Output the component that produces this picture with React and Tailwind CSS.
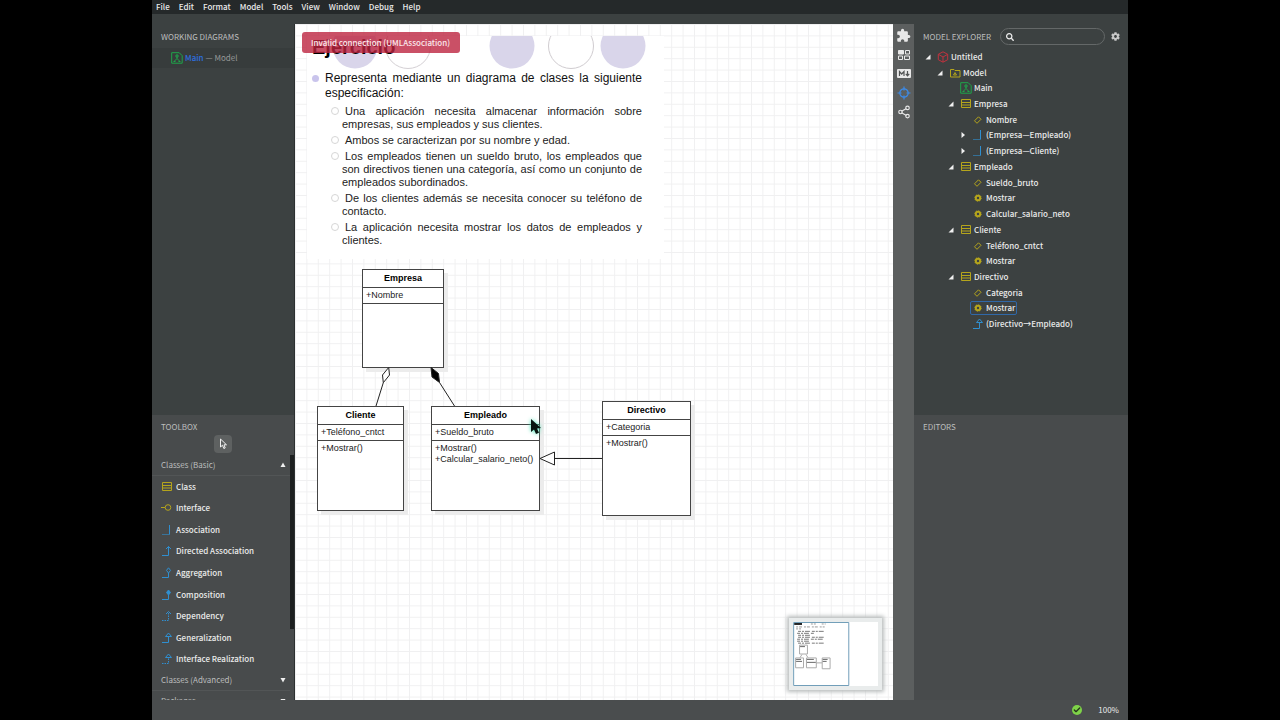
import { Share2, Check } from 'lucide-react'
import { FaCog, FaSearch } from 'react-icons/fa'
import { MdExtension } from 'react-icons/md'

const YELLOW = '#b5a51c'
const BLUE = '#2f8fd0'
const GREEN = '#1fa64a'

const MENUS = ['File', 'Edit', 'Format', 'Model', 'Tools', 'View', 'Window', 'Debug', 'Help']

const TOOLS = [
  { kind: 'class', label: 'Class' },
  { kind: 'interface', label: 'Interface' },
  { kind: 'association', label: 'Association' },
  { kind: 'directed', label: 'Directed Association' },
  { kind: 'aggregation', label: 'Aggregation' },
  { kind: 'composition', label: 'Composition' },
  { kind: 'dependency', label: 'Dependency' },
  { kind: 'generalization', label: 'Generalization' },
  { kind: 'realization', label: 'Interface Realization' },
]

const TREE = [
  { level: 0, kind: 'project', label: 'Untitled', arrow: 'open' },
  { level: 1, kind: 'model', label: 'Model', arrow: 'open' },
  { level: 2, kind: 'diagram', label: 'Main' },
  { level: 2, kind: 'class', label: 'Empresa', arrow: 'open' },
  { level: 3, kind: 'attribute', label: 'Nombre' },
  { level: 3, kind: 'association', label: '(Empresa—Empleado)', arrow: 'closed' },
  { level: 3, kind: 'association', label: '(Empresa—Cliente)', arrow: 'closed' },
  { level: 2, kind: 'class', label: 'Empleado', arrow: 'open' },
  { level: 3, kind: 'attribute', label: 'Sueldo_bruto' },
  { level: 3, kind: 'operation', label: 'Mostrar' },
  { level: 3, kind: 'operation', label: 'Calcular_salario_neto' },
  { level: 2, kind: 'class', label: 'Cliente', arrow: 'open' },
  { level: 3, kind: 'attribute', label: 'Teléfono_cntct' },
  { level: 3, kind: 'operation', label: 'Mostrar' },
  { level: 2, kind: 'class', label: 'Directivo', arrow: 'open' },
  { level: 3, kind: 'attribute', label: 'Categoria' },
  { level: 3, kind: 'operation', label: 'Mostrar', selected: true },
  { level: 3, kind: 'generalization', label: '(Directivo→Empleado)' },
]

const INDENT = ['pl-[11px]', 'pl-[23px]', 'pl-[34px]', 'pl-[46px]']

const REQUIREMENTS = [
  'Una aplicación necesita almacenar información sobre empresas, sus empleados y sus clientes.',
  'Ambos se caracterizan por su nombre y edad.',
  'Los empleados tienen un sueldo bruto, los empleados que son directivos tienen una categoría, así como un conjunto de empleados subordinados.',
  'De los clientes además se necesita conocer su teléfono de contacto.',
  'La aplicación necesita mostrar los datos de empleados y clientes.',
]

function Glyph({ kind }) {
  const path = {
    class: <path stroke={YELLOW} d="M1.5 1.5h9v8h-9zM1.5 4.5h9M1.5 7h9" />,
    interface: (
      <g stroke={YELLOW}>
        <path d="M0 5.5h4" />
        <circle cx="7" cy="5.5" r="2.8" />
      </g>
    ),
    association: (
      <g stroke={BLUE}>
        <path d="M1 10.5h7.5" strokeOpacity="0.6" />
        <path d="M8.5 10.5V1" />
      </g>
    ),
    directed: <path stroke={BLUE} d="M1 10.5h6.5V1.5M5 4l2.5-2.5L10 4" />,
    aggregation: <path stroke={BLUE} d="M1 10.5h6.5V6M7.5 .8l2 2.6-2 2.6-2-2.6z" />,
    composition: (
      <g stroke={BLUE}>
        <path d="M1 10.5h6.5V6" />
        <path fill={BLUE} d="M7.5 1l2 2.5-2 2.5-2-2.5z" />
      </g>
    ),
    dependency: (
      <g stroke={BLUE}>
        <path strokeDasharray="1.5 1" d="M1 10.5h6.5V2" />
        <path d="M5 4l2.5-2.5L10 4" />
      </g>
    ),
    generalization: <path stroke={BLUE} d="M1 10.5h6.5v-6M4.5 4.5l3-3.5 3 3.5z" />,
    realization: (
      <g stroke={BLUE}>
        <path strokeDasharray="1.5 1" d="M1 10.5h6.5v-6" />
        <path d="M4.5 4.5l3-3.5 3 3.5z" />
      </g>
    ),
    project: <path stroke="#c0323f" d="M6 .8l4.7 2.5v5.4L6 11.2 1.3 8.7V3.3zM1.5 3.4L6 6l4.5-2.6M6 6v5" />,
    model: (
      <g stroke={YELLOW}>
        <path d="M1.5 2.5h3.500l1 1h5v6.500H1.500z" />
        <path d="M4.5 8L6 5.5 7.5 8z" />
      </g>
    ),
    diagram: (
      <g stroke={GREEN}>
        <path d="M.7.700h7.500l3 3v7.500H.7z" />
        <path d="M5 3h2v2H5zM6 5v1.500M3.500 9L6 6.500 8.500 9M2.500 9.500h2M7.500 9.500h2" />
      </g>
    ),
    attribute: <path stroke={YELLOW} d="M2.500 6.800l4-4 2.500 2.500-4 4z" />,
    operation: (
      <g stroke={YELLOW}>
        <circle cx="6" cy="6" r="2.2" strokeWidth="2" />
        <circle cx="6" cy="6" r="3.2" strokeDasharray="1.2 1.3" />
      </g>
    ),
  }[kind]
  return (
    <svg viewBox="0 0 12 12" className="size-3 shrink-0" fill="none" strokeWidth="1" aria-hidden>
      {path}
    </svg>
  )
}

function Arrow({ state }) {
  return (
    <svg viewBox="0 0 6 6" className="size-[6px] shrink-0" fill="#f0f0f0" aria-hidden>
      {state === 'open' && <path d="M5.500 .5v5h-5z" />}
      {state === 'closed' && <path d="M1.500 0L5 3 1.500 6z" />}
    </svg>
  )
}

function GroupHeader({ label, open }) {
  return (
    <button
      type="button"
      className="flex h-[21px] w-full shrink-0 items-center justify-between border-b border-[#525556] pr-1 pl-[9px] text-[#bcbebe]"
    >
      {label}
      <svg viewBox="0 0 6 6" className="size-[6px]" fill="#f0f0f0" aria-hidden>
        <path d={open ? 'M3 .5L5.500 5h-5z' : 'M3 5.500L5.500 1h-5z'} />
      </svg>
    </button>
  )
}

function LeftSidebar() {
  return (
    <aside className="flex w-[143px] shrink-0 flex-col border-r border-[#2c3030]">
      <section className="h-[391px] shrink-0 bg-[#3c4141] pt-[5px]">
        <h2 className="pl-[9px] leading-4 text-[#bcbebe]">WORKING DIAGRAMS</h2>
        <button type="button" className="mt-[3px] flex h-5 w-full items-center gap-[2px] bg-[#373c3c] pl-[19px]">
          <Glyph kind="diagram" />
          <span className="font-medium text-[#2d6fe0]">Main</span>
          <span className="text-[#969999]">— Model</span>
        </button>
      </section>
      <section className="flex min-h-0 flex-1 flex-col bg-[#484b4c] pt-1">
        <h2 className="pl-[9px] leading-4 text-[#bcbebe]">TOOLBOX</h2>
        <button
          type="button"
          aria-label="Select"
          className="mx-auto flex size-[18px] shrink-0 items-center justify-center rounded-sm bg-[#5e6161]"
        >
          <svg viewBox="0 0 12 12" className="size-3" fill="none" stroke="#f2f2f2" aria-hidden>
            <path d="M3.500 1v8l2-1.800L6.800 10.500 8.200 10 7 6.800h2.500z" />
          </svg>
        </button>
        <div className="mt-[2px] flex min-h-0 flex-1">
          <div className="min-w-0 flex-1 overflow-hidden">
            <GroupHeader label="Classes (Basic)" open />
            <ul className="grid h-[194px] auto-rows-fr">
              {TOOLS.map((t) => (
                <li key={t.kind} className="flex">
                  <button type="button" className="flex w-full items-center gap-[3px] pl-[9px] font-medium text-[#ebebeb]">
                    <Glyph kind={t.kind} />
                    {t.label}
                  </button>
                </li>
              ))}
            </ul>
            <GroupHeader label="Classes (Advanced)" />
            <GroupHeader label="Packages" />
          </div>
          <div className="h-[174px] w-1 bg-[#1d2020]" />
        </div>
      </section>
    </aside>
  )
}

function Slide() {
  return (
    <article className="absolute top-3 left-3 w-[357px] bg-white pr-[22px] pb-3 pl-[5px] font-['Liberation_Sans',sans-serif] text-[#222]">
      <svg className="absolute top-0 left-0 h-[34px] w-full" fill="none" aria-hidden>
        <circle cx="48" cy="10" r="22.5" fill="#d9d5ea" />
        <circle cx="101" cy="10" r="22.5" stroke="#d4d0d4" />
        <circle cx="205" cy="10" r="22.5" fill="#d9d5ea" />
        <circle cx="264" cy="10" r="22.5" stroke="#d0ccd0" />
        <circle cx="316" cy="10" r="22.5" fill="#d9d5ea" />
      </svg>
      <h1 className="relative h-[35px] text-[20px] leading-[22px] font-bold text-black">Ejercicio</h1>
      <div className="flex gap-[6px]">
        <span className="mt-1 size-[7px] shrink-0 rounded-full bg-[#c9c4ec]" />
        <p className="text-justify text-[12px] leading-[15px] text-[#111]">
          Representa mediante un diagrama de clases la siguiente especificación:
        </p>
      </div>
      <ul className="mt-1 flex flex-col gap-[3px] pl-[19px] text-[11px] leading-[13px]">
        {REQUIREMENTS.map((text) => (
          <li key={text} className="flex gap-[3px]">
            <span className="mt-[2px] size-2 shrink-0 rounded-full border border-[#d6d6d6]" />
            <p className="flex-1 text-justify indent-[3px]">{text}</p>
          </li>
        ))}
      </ul>
    </article>
  )
}

function UmlClass({ name, attributes, operations = [], className }) {
  return (
    <div
      className={`absolute border border-[#444] bg-white font-['Liberation_Sans',sans-serif] text-[9px] leading-[11px] text-[#222] shadow-[4px_4px_0_#ececec] ${className}`}
    >
      <h3 className="h-[18px] border-b border-[#444] pt-[3px] text-center font-bold text-black">{name}</h3>
      <div className="h-4 border-b border-[#444] pt-[2px] pl-[3px]">
        {attributes.map((a) => (
          <p key={a}>+{a}</p>
        ))}
      </div>
      <div className="pt-[2px] pl-[3px]">
        {operations.map((o) => (
          <p key={o}>+{o}()</p>
        ))}
      </div>
    </div>
  )
}

function Minimap() {
  return (
    <div className="absolute right-[11px] bottom-[10px] h-[72px] w-[93px] border-4 border-[#e9ecec] bg-white shadow-[0_0_4px_2px_#b9bdbd]">
      <svg className="size-full" viewBox="0 0 86 65" fill="none" aria-hidden>
        <g stroke="#777" strokeWidth="1">
          <path stroke="#222" strokeWidth="2" d="M1 2h8" />
          <path stroke="#999" strokeDasharray="2 1 3 2" d="M18 2h5M29 2h4M3 5h29M3 7h5" />
          <path strokeDasharray="3 1 2 1 5 2" d="M5 9.500h27M4 11.500h17M5 13.500h14M5 15.500h27M4 17.500h28M4 19.500h12M5 21.500h27" />
        </g>
        <g stroke="#aaa">
          <path d="M6.500 23.500h8v9h-8zM2.500 36.500h8v10h-8zM13.500 36.500h10v10h-10zM29.500 36.500h8v11h-8zM23.500 41.500h6M9 33l-2 3M13 33l2 3" />
        </g>
        <path stroke="#666" d="M7 25h5M3 38h5M3 40h6M14 38h7M14 41h9M30 38h5M30 40h4" />
        <path stroke="#6f9cb8" d="M.5.500h56v64H.5z" />
      </svg>
    </div>
  )
}

function Canvas() {
  return (
    <main className="relative min-w-0 flex-1 overflow-hidden bg-white">
      <svg className="absolute inset-0 size-full" aria-hidden>
        <defs>
          <pattern id="grid" width="11.4" height="11.4" patternUnits="userSpaceOnUse">
            <path d="M.5 0v11.400M0 .5h11.400" stroke="#f0f0f1" fill="none" />
          </pattern>
        </defs>
        <rect width="100%" height="100%" fill="url(#grid)" />
      </svg>
      <Slide />
      <UmlClass name="Empresa" attributes={['Nombre']} className="top-[245px] left-[67px] h-[99px] w-[82px]" />
      <UmlClass
        name="Cliente"
        attributes={['Teléfono_cntct']}
        operations={['Mostrar']}
        className="top-[382px] left-[22px] h-[105px] w-[87px]"
      />
      <UmlClass
        name="Empleado"
        attributes={['Sueldo_bruto']}
        operations={['Mostrar', 'Calcular_salario_neto']}
        className="top-[382px] left-[136px] h-[105px] w-[109px]"
      />
      <UmlClass
        name="Directivo"
        attributes={['Categoria']}
        operations={['Mostrar']}
        className="top-[377px] left-[307px] h-[115px] w-[89px]"
      />
      <svg className="absolute inset-0 size-full" fill="none" stroke="#222" aria-hidden>
        <path fill="#fff" d="M93.700 343.500L87.500 351 88.300 358.700 94.500 351z" />
        <path d="M88.300 358.700L81 382" />
        <path fill="#000" d="M136 343.500l7.500 6 1 9-7.500-5.500z" />
        <path d="M144.500 358.500L159.500 382" />
        <path fill="#fff" d="M245 434.500l14.500-6.500v13z" />
        <path d="M259.500 434.500H307" />
      </svg>
      <div
        role="alert"
        className="absolute top-2 left-[7px] flex h-[21px] items-center rounded-[3px] bg-[#bd2440]/80 pr-[10px] pl-[9px] font-medium text-[#fbe9ec]"
      >
        Invalid connection (UMLAssociation)
      </div>
      <svg
        className="absolute top-[391px] left-[233px] h-6 w-4 overflow-visible drop-shadow-[0_0_2px_#2fe0ac]"
        viewBox="0 0 16 24"
        aria-hidden
      >
        <path d="M3 4v13l3-2.500L8 19l3-1.200-2-4.300 4-.5z" fill="#07140f" />
      </svg>
      <Minimap />
    </main>
  )
}

function Toolbar() {
  const button = 'flex h-[19px] w-full items-center justify-center'
  return (
    <nav className="flex w-[21px] shrink-0 flex-col bg-[#5c5f5f] pt-[2px] text-[#e8e8e8]">
      <button type="button" aria-label="Extensions" className={button}>
        <MdExtension className="size-[15px]" />
      </button>
      <button type="button" aria-label="Diagrams" className={button}>
        <svg viewBox="0 0 14 12" className="h-3 w-[14px]" fill="none" stroke="currentColor" aria-hidden>
          <path fill="currentColor" d="M1.500 1.500h5v3.500h-5z" />
          <path d="M8.500 1.500h4v3.500h-4zM1.500 7h4v3.500h-4zM7.500 7h5v3.500h-5z" />
        </svg>
      </button>
      <button type="button" aria-label="Markdown" className={button}>
        <svg viewBox="0 0 14 9" className="h-[9px] w-[14px]" aria-hidden>
          <rect width="14" height="9" rx="1" fill="currentColor" />
          <path
            d="M2.500 7V2.500L4.700 5 7 2.500V7M10.500 2v4M8.800 4.800l1.700 2 1.700-2"
            fill="none"
            stroke="#505353"
            strokeWidth="1.2"
          />
        </svg>
      </button>
      <button type="button" aria-label="Navigate" className={button}>
        <svg
          viewBox="0 0 14 14"
          className="size-[14px] text-[#3d8be8]"
          fill="none"
          stroke="currentColor"
          strokeWidth="1.2"
          aria-hidden
        >
          <circle cx="7" cy="7" r="4.2" />
          <path d="M7 .5v4M7 9.500v4M.5 7h4M9.500 7h4" />
        </svg>
      </button>
      <button type="button" aria-label="Relationships" className={button}>
        <Share2 className="size-[14px]" />
      </button>
    </nav>
  )
}

function ModelExplorer() {
  return (
    <aside className="flex w-[214px] shrink-0 flex-col">
      <section className="h-[391px] shrink-0 bg-[#3c4141]">
        <header className="flex h-[25px] items-center pr-2 pl-[9px]">
          <h2 className="w-[71px] shrink-0 text-[#bcbebe]">MODEL EXPLORER</h2>
          <label className="ml-[6px] flex h-[17px] min-w-0 flex-1 items-center rounded-full border border-[#646868] px-[5px]">
            <FaSearch className="size-2 shrink-0 text-[#eee]" />
            <input type="text" aria-label="Search model" className="w-full min-w-0 bg-transparent pl-1 outline-none" />
          </label>
          <button type="button" aria-label="Settings" className="ml-[6px] flex">
            <FaCog className="size-[9px] text-[#c8c8c8]" />
          </button>
        </header>
        <ul role="tree" className="grid h-[283px] auto-rows-fr">
          {TREE.map((n, i) => (
            <li
              key={i}
              role="treeitem"
              aria-selected={!!n.selected}
              className={`flex items-center gap-1 ${INDENT[n.level]}`}
            >
              <Arrow state={n.arrow} />
              <button
                type="button"
                className={`flex h-[14px] items-center gap-[2px] rounded-[2px] border px-[1px] font-medium text-[#ebebeb] ${n.selected ? 'border-[#3068a8]' : 'border-transparent'}`}
              >
                <Glyph kind={n.kind} />
                {n.label}
              </button>
            </li>
          ))}
        </ul>
      </section>
      <section className="flex-1 bg-[#484b4c] pt-1">
        <h2 className="pl-[9px] leading-4 text-[#bcbebe]">EDITORS</h2>
      </section>
    </aside>
  )
}

export default function App() {
  return (
    <div className="h-screen bg-black px-[152px] font-['Noto_Sans_CJK_SC',sans-serif] text-[8px] leading-[14px]">
      <div className="flex h-full flex-col overflow-hidden bg-[#3c4141]">
        <nav className="flex h-[14px] shrink-0 items-center gap-[9px] bg-[#25292a] pl-1 font-medium text-[#ebebeb]">
          {MENUS.map((m) => (
            <button key={m} type="button">
              {m}
            </button>
          ))}
        </nav>
        <div className="h-[10px] shrink-0" />
        <div className="flex min-h-0 flex-1">
          <LeftSidebar />
          <Canvas />
          <Toolbar />
          <ModelExplorer />
        </div>
        <footer className="flex h-5 shrink-0 items-center justify-end gap-4 bg-[#4a4d4e] pr-[9px] text-[#ebebeb]">
          <span className="flex size-[10px] items-center justify-center rounded-full bg-[#7ed348]">
            <Check className="size-2 text-[#26351c]" strokeWidth={4} />
          </span>
          <span>100%</span>
        </footer>
      </div>
    </div>
  )
}
